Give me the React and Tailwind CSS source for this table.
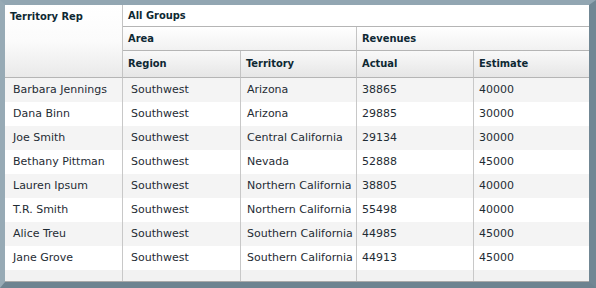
import React from "react";

const rows = [
  ["Barbara Jennings", "Southwest", "Arizona", "38865", "40000"],
  ["Dana Binn", "Southwest", "Arizona", "29885", "30000"],
  ["Joe Smith", "Southwest", "Central California", "29134", "30000"],
  ["Bethany Pittman", "Southwest", "Nevada", "52888", "45000"],
  ["Lauren Ipsum", "Southwest", "Northern California", "38805", "40000"],
  ["T.R. Smith", "Southwest", "Northern California", "55498", "40000"],
  ["Alice Treu", "Southwest", "Southern California", "44985", "45000"],
  ["Jane Grove", "Southwest", "Southern California", "44913", "45000"],
];

const pads = ["pl-[8px]", "pl-[8px]", "pl-[6px]", "pl-[5px]", "pl-[5px]"];

const hd = "flex items-center pl-[5px] text-[11px] font-bold text-[#0e2833] whitespace-nowrap";

export default function App() {
  return (
    <div
      className="w-[596px] h-[288px] border-t-[5px] border-l-[5px] border-r-[7px] border-b-[6px] border-t-[#92a6b2] border-l-[#97aab5] border-b-[#6d8390] border-r-[#718794] bg-[#7f95a2]"
      style={{ fontFamily: '"DejaVu Sans", Verdana, sans-serif' }}
    >
      <div className="w-[584px] h-[277px] bg-[#f1f1f1] border-b border-[#a9a9a9] flex flex-col">
        <div
          className="grid grid-cols-[118px_118px_116px_117px_115px] grid-rows-[22px_24px_27px]"
          style={{ fontFamily: '"DejaVu Sans Condensed", "DejaVu Sans", sans-serif' }}
        >
          <div className={`${hd} row-span-3 items-start pt-[4px] border-r border-b border-r-[#c4c4c4] border-b-[#b5b5b5] bg-gradient-to-b from-[#ffffff] via-[#fbfbfb] to-[#e9e9e9]`}>
            Territory Rep
          </div>
          <div className={`${hd} col-span-4 pt-[1px] bg-white border-b border-[#b5b5b5]`}>All Groups</div>
          <div className={`${hd} col-span-2 pt-[2px] border-r border-b border-r-[#c4c4c4] border-b-[#b5b5b5] bg-gradient-to-b from-[#ffffff] to-[#f1f1f1]`}>Area</div>
          <div className={`${hd} col-span-2 pt-[2px] border-b border-[#b5b5b5] bg-gradient-to-b from-[#ffffff] to-[#f1f1f1]`}>Revenues</div>
          <div className={`${hd} border-r border-b border-r-[#c4c4c4] border-b-[#b5b5b5] bg-gradient-to-b from-[#f9f9f9] to-[#e6e6e6]`}>Region</div>
          <div className={`${hd} border-r border-b border-r-[#c4c4c4] border-b-[#b5b5b5] bg-gradient-to-b from-[#f9f9f9] to-[#e6e6e6]`}>Territory</div>
          <div className={`${hd} border-r border-b border-r-[#c4c4c4] border-b-[#b5b5b5] bg-gradient-to-b from-[#f9f9f9] to-[#e6e6e6]`}>Actual</div>
          <div className={`${hd} border-b border-[#b5b5b5] bg-gradient-to-b from-[#f9f9f9] to-[#e6e6e6]`}>Estimate</div>
        </div>
        <div className="flex flex-col flex-1">
          {rows.map((r, i) => (
            <div
              key={i}
              className={`grid grid-cols-[118px_118px_116px_117px_115px] h-[24px] ${i % 2 === 0 ? "bg-[#f4f4f4]" : "bg-white"}`}
            >
              {r.map((c, j) => (
                <div
                  key={j}
                  className={`flex items-center ${pads[j]} text-[11px] text-[#1f2c34] whitespace-nowrap ${j < 4 ? "border-r border-[#c8c8c8]" : ""}`}
                >
                  {c}
                </div>
              ))}
            </div>
          ))}
          <div className="grid grid-cols-[118px_118px_116px_117px_115px] flex-1 bg-[#f2f2f2]">
            <div className="border-r border-[#c8c8c8]" />
            <div className="border-r border-[#c8c8c8]" />
            <div className="border-r border-[#c8c8c8]" />
            <div className="border-r border-[#c8c8c8]" />
            <div />
          </div>
        </div>
      </div>
    </div>
  );
}
